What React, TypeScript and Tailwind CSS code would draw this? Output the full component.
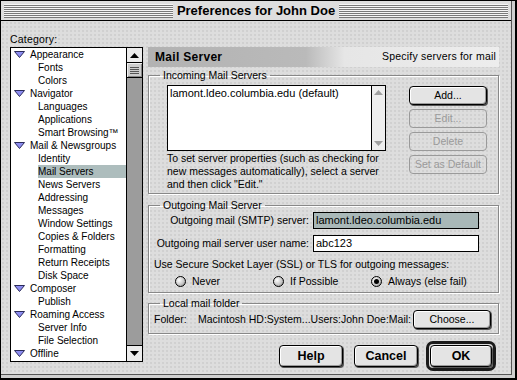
import React from "react";

const categories: { label: string; parent?: boolean; selected?: boolean }[] = [
  { label: "Appearance", parent: true },
  { label: "Fonts" },
  { label: "Colors" },
  { label: "Navigator", parent: true },
  { label: "Languages" },
  { label: "Applications" },
  { label: "Smart Browsing™" },
  { label: "Mail & Newsgroups", parent: true },
  { label: "Identity" },
  { label: "Mail Servers", selected: true },
  { label: "News Servers" },
  { label: "Addressing" },
  { label: "Messages" },
  { label: "Window Settings" },
  { label: "Copies & Folders" },
  { label: "Formatting" },
  { label: "Return Receipts" },
  { label: "Disk Space" },
  { label: "Composer", parent: true },
  { label: "Publish" },
  { label: "Roaming Access", parent: true },
  { label: "Server Info" },
  { label: "File Selection" },
  { label: "Offline", parent: true },
];

const Disclosure = () => (
  <svg width="11" height="7" viewBox="0 0 11 7" className="shrink-0">
    <polygon points="0.5,0.5 10.5,0.5 5.5,6.5" fill="#8c8cf0" stroke="#2a2a5a" strokeWidth="1" />
  </svg>
);

const Arrow = ({ down, color }: { down?: boolean; color: string }) => (
  <svg width="9" height="5" viewBox="0 0 9 5">
    <polygon points={down ? "0,0 9,0 4.5,5" : "0,5 9,5 4.5,0"} fill={color} />
  </svg>
);

const SmallButton = ({ label, disabled }: { label: string; disabled?: boolean }) => (
  <div
    className={`h-[19px] w-[78px] flex items-center justify-center rounded-[4px] text-[10.5px] ${
      disabled
        ? "border border-[#9a9a9a] text-[#9a9a9a]"
        : "border border-black bg-[#e4e4e4] shadow-[inset_1px_1px_0_#fff,inset_-1px_-1px_0_#9a9a9a,1px_1px_0_#555]"
    }`}
  >
    {label}
  </div>
);

const BigButton = ({ label, wide }: { label: string; wide?: boolean }) => (
  <div
    className={`h-[22px] ${wide ? "w-[62px]" : "w-[64px]"} flex items-center justify-center rounded-[4px] border border-black bg-[#e4e4e4] shadow-[inset_1px_1px_0_#fff,inset_-1px_-1px_0_#9a9a9a,1px_1px_0_#555] font-bold text-[12.5px]`}
  >
    {label}
  </div>
);

const Radio = ({ label, checked }: { label: string; checked?: boolean }) => (
  <div className="w-[98px] flex items-center gap-[6px]">
    <div className="w-[11px] h-[11px] rounded-full border border-black bg-[radial-gradient(circle_at_35%_35%,#ffffff_0%,#c8c8c8_55%,#7a7a7a_100%)] flex items-center justify-center">
      {checked && <div className="w-[5px] h-[5px] rounded-full bg-black" />}
    </div>
    <span>{label}</span>
  </div>
);

const legendCls = "ml-[11px] px-[3px] leading-[13px] text-[10.5px]";
const groupCls =
  "border border-[#888] rounded-none shadow-[1px_1px_0_#fff,inset_1px_1px_0_#fff] min-w-0";

export default function App() {
  return (
    <div className="w-[517px] h-[380px] border border-black border-r-2 border-b-2 bg-[#cfcfcf] pr-[3px] pb-[3px] font-['Liberation_Sans',Arial,sans-serif] text-black text-[10.5px]">
      <div className="h-full flex flex-col border-r border-b border-[#555] bg-[#dddddd] bg-[radial-gradient(circle,#c9c9c9_0.6px,transparent_0.9px)] bg-[length:4px_4px]">
        {/* Title bar */}
        <div className="h-[20px] shrink-0 flex items-center gap-[4px] px-[3px] border-b border-black bg-[#dedede]">
          <div className="flex-1 h-[14px] bg-[repeating-linear-gradient(to_bottom,#f6f6f6_0px,#f6f6f6_1px,#7a7a7a_1px,#7a7a7a_2px)]" />
          <span className="font-bold text-[13px] leading-none">Preferences for John Doe</span>
          <div className="flex-1 h-[14px] bg-[repeating-linear-gradient(to_bottom,#f6f6f6_0px,#f6f6f6_1px,#7a7a7a_1px,#7a7a7a_2px)]" />
        </div>

        <div className="flex-1 flex pl-[9px]">
          {/* Category column */}
          <div className="w-[133px] pt-[11px] flex flex-col">
            <div className="h-[15px] leading-[15px] text-[10.5px] tracking-[0.2px]">Category:</div>
            <div className="h-[315px] border border-black flex bg-white">
              <div className="flex-1 min-w-0 overflow-hidden">
                {categories.map((c) => (
                  <div key={c.label} className="h-[13px] flex items-center whitespace-nowrap">
                    {c.parent ? (
                      <div className="flex items-center gap-[5px] pl-[3px]">
                        <Disclosure />
                        <span className="leading-[13px] text-[10px]">{c.label}</span>
                      </div>
                    ) : (
                      <span
                        className={`ml-[27px] flex-1 leading-[13px] text-[10px] ${
                          c.selected ? "bg-[#adbdbd]" : ""
                        }`}
                      >
                        {c.label}
                      </span>
                    )}
                  </div>
                ))}
              </div>
              <div className="w-[16px] shrink-0 border-l border-black flex flex-col">
                <div className="h-[15px] border-b border-black bg-[#ececec] flex items-center justify-center">
                  <Arrow color="#000" />
                </div>
                <div className="h-[15px] border-b border-black bg-[#cdcdcd] flex flex-col items-center justify-center gap-[1px] shadow-[inset_1px_1px_0_#f0f0f0,inset_-1px_-1px_0_#888]">
                  <div className="w-[9px] h-[1px] bg-[#555]" />
                  <div className="w-[9px] h-[1px] bg-[#555]" />
                  <div className="w-[9px] h-[1px] bg-[#555]" />
                  <div className="w-[9px] h-[1px] bg-[#555]" />
                </div>
                <div className="flex-1 bg-[#9c9c9c]" />
                <div className="h-[16px] border-t border-black bg-[#ececec] flex items-center justify-center">
                  <Arrow down color="#000" />
                </div>
              </div>
            </div>
          </div>

          {/* Settings panel */}
          <div className="w-[351px] ml-[5px] pt-[26px] flex flex-col">
            <div className="h-[20px] flex items-center justify-between pl-[7px] pr-[3px] bg-[linear-gradient(to_right,#b2b2b2_0%,#bababa_45%,#e6e6e6_56%,#ededed_100%)]">
              <span className="font-bold text-[12px] tracking-[0.3px]">Mail Server</span>
              <span className="text-[10.5px] tracking-[0.2px]">Specify servers for mail</span>
            </div>

            {/* Incoming */}
            <fieldset className={`mt-[2px] ${groupCls}`}>
              <legend className={legendCls}>Incoming Mail Servers</legend>
              <div className="flex pl-[18px] pr-[11px] pt-[3px] pb-[2px]">
                <div className="flex flex-col">
                  <div className="w-[219px] h-[66px] border border-black bg-white flex">
                    <div className="flex-1 pl-[2px] pt-[1px] text-[11px] leading-[13px]">
                      lamont.ldeo.columbia.edu (default)
                    </div>
                    <div className="w-[14px] border-l border-black bg-[#eeeeee] flex flex-col justify-between py-[4px] items-center">
                      <Arrow color="#a0a0a0" />
                      <Arrow down color="#a0a0a0" />
                    </div>
                  </div>
                  <div className="mt-[1px] leading-[13px] text-[10.5px] whitespace-nowrap">
                    To set server properties (such as checking for
                    <br />
                    new messages automatically), select a server
                    <br />
                    and then click "Edit."
                  </div>
                </div>
                <div className="ml-auto mt-[1px] flex flex-col gap-[4px]">
                  <SmallButton label="Add..." />
                  <SmallButton label="Edit..." disabled />
                  <SmallButton label="Delete" disabled />
                  <SmallButton label="Set as Default" disabled />
                </div>
              </div>
            </fieldset>

            {/* Outgoing */}
            <fieldset className={`mt-[5px] ${groupCls}`}>
              <legend className={legendCls}>Outgoing Mail Server</legend>
              <div className="pb-[4px]">
                <div className="flex items-center h-[17px]">
                  <span className="w-[161px] text-right pr-[1px]">Outgoing mail (SMTP) server:</span>
                  <div className="ml-[3px] w-[166px] h-[17px] border border-black bg-[#a9b8b8] pl-[2px] text-[11px] leading-[15px]">
                    lamont.ldeo.columbia.edu
                  </div>
                </div>
                <div className="flex items-center h-[17px] mt-[6px]">
                  <span className="w-[161px] text-right pr-[1px]">Outgoing mail server user name:</span>
                  <div className="ml-[3px] w-[166px] h-[17px] border border-black bg-white pl-[2px] text-[11px] leading-[15px]">
                    abc123
                  </div>
                </div>
                <div className="mt-[6px] pl-[5px] leading-[13px]">
                  Use Secure Socket Layer (SSL) or TLS for outgoing messages:
                </div>
                <div className="mt-[4px] pl-[26px] flex h-[13px]">
                  <Radio label="Never" />
                  <Radio label="If Possible" />
                  <Radio label="Always (else fail)" checked />
                </div>
              </div>
            </fieldset>

            {/* Local folder */}
            <fieldset className={`mt-[4px] ${groupCls}`}>
              <legend className={legendCls}>Local mail folder</legend>
              <div className="flex items-center h-[19px] pl-[5px] pr-[7px] mb-[4px]">
                <span className="w-[44px]">Folder:</span>
                <span>Macintosh HD:System...Users:John Doe:Mail:</span>
                <div className="ml-auto">
                  <SmallButton label="Choose..." />
                </div>
              </div>
            </fieldset>

            {/* Dialog buttons */}
            <div className="mt-[8px] h-[28px] flex items-center justify-end pr-[3px]">
              <BigButton label="Help" />
              <div className="ml-[11px]">
                <BigButton label="Cancel" />
              </div>
              <div className="ml-[8px] border-[3px] border-[#1a1a1a] rounded-[7px] p-[1px]">
                <BigButton label="OK" wide />
              </div>
            </div>
          </div>
        </div>
      </div>
    </div>
  );
}
